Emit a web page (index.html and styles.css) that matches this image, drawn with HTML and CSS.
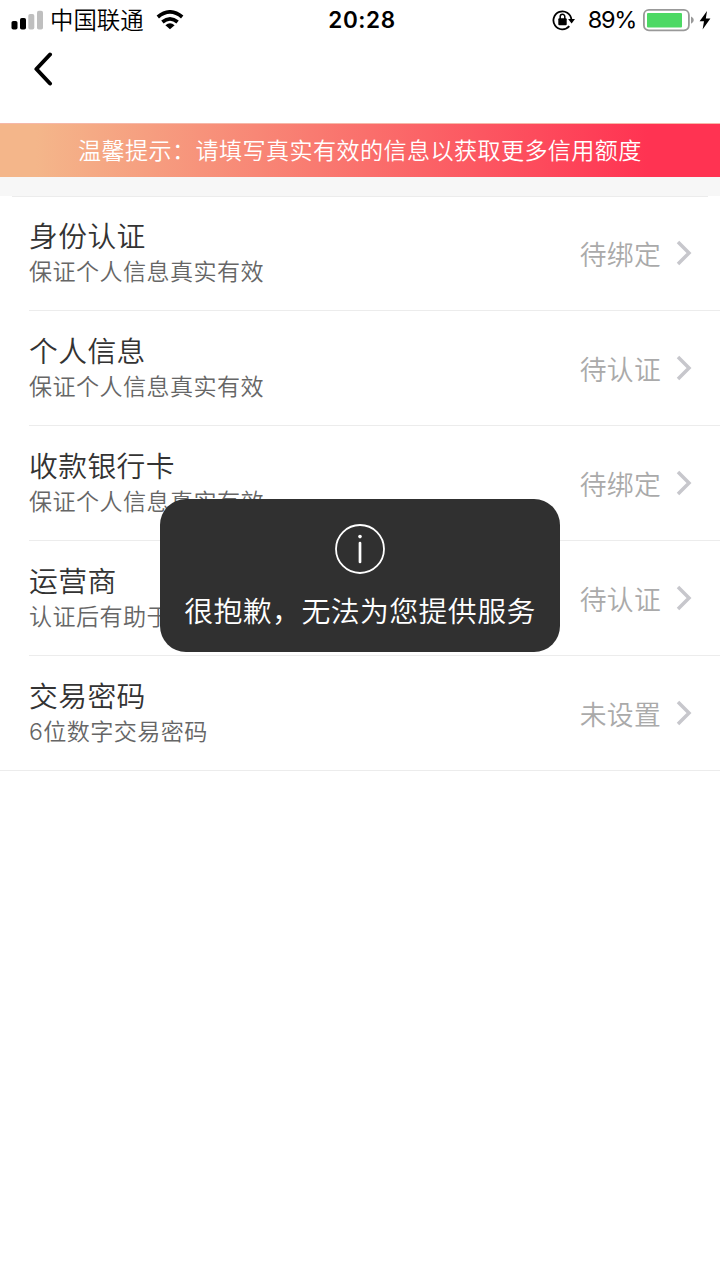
FILE: index.html
```html
<!DOCTYPE html>
<html lang="zh-CN">
<head>
<meta charset="utf-8">
<title>认证</title>
<link rel="stylesheet" href="styles.css">
</head>
<body>
<header class="status-bar">
  <div class="status-left">
    <svg class="signal" width="33" height="20" viewBox="0 0 33 20">
      <rect x="0.5" y="11" width="6" height="8.5" rx="1.8"/>
      <rect x="9" y="8" width="6" height="11.5" rx="1.8"/>
      <rect class="signal-off" x="17.3" y="4" width="6" height="15.5" rx="1.8"/>
      <rect class="signal-off" x="26" y="0.8" width="6" height="18.7" rx="1.8"/>
    </svg>
    <span class="carrier">中国联通</span>
    <svg class="wifi" width="28" height="20" viewBox="0 0 28 20">
      <path d="M1.8 7Q14-3.2 26.2 7M6.4 12Q14 5.8 21.6 12" fill="none" stroke="#000" stroke-width="3.7"/>
      <path d="M9.4 15.2Q14 11.4 18.6 15.2L14 19.2Z"/>
    </svg>
  </div>
  <time class="clock">20:28</time>
  <div class="status-right">
    <svg class="rotation-lock" width="24" height="22" viewBox="0 0 24 22">
      <path d="M17.3 17.2A9 9 0 1 1 19.4 10.5" fill="none" stroke="#000" stroke-width="1.8"/>
      <path d="M16.1 10H23L19.6 14.4Z"/>
      <rect x="6.3" y="9.2" width="8.4" height="7" rx="1"/>
      <path d="M8.2 10V7.6a2.3 2.3 0 0 1 4.6 0V10" fill="none" stroke="#000" stroke-width="1.5"/>
    </svg>
    <span class="percent">89%</span>
    <svg class="battery" width="51" height="23" viewBox="0 0 51 23">
      <rect x="0.9" y="0.9" width="45" height="20.4" rx="5" fill="#fff" stroke="#999" stroke-width="1.8"/>
      <rect x="4" y="4" width="35" height="14.4" rx="1" fill="#4cd964"/>
      <path d="M48 7.5q2.8 1 2.8 3.6T48 14.7Z" fill="#999"/>
    </svg>
    <svg class="bolt" width="12" height="19" viewBox="0 0 12 19">
      <path d="M8 0L0.6 10.2H5L3.6 18.6L11.4 7.6H6.8Z"/>
    </svg>
  </div>
</header>
<nav class="nav-bar">
  <svg class="back" width="20" height="34" viewBox="0 0 20 34">
    <path d="M17 2.5L3.4 17L17 31.5" fill="none" stroke="#000" stroke-width="4" stroke-linecap="round" stroke-linejoin="round"/>
  </svg>
</nav>
<p class="notice">温馨提示：请填写真实有效的信息以获取更多信用额度</p>
<main class="list">
  <section class="row">
    <div class="info"><h2 class="title">身份认证</h2><p class="desc">保证个人信息真实有效</p></div>
    <span class="state">待绑定</span>
    <svg class="chevron" width="17" height="26" viewBox="0 0 17 26"><path d="M2 2L13 13L2 24"/></svg>
  </section>
  <section class="row">
    <div class="info"><h2 class="title">个人信息</h2><p class="desc">保证个人信息真实有效</p></div>
    <span class="state">待认证</span>
    <svg class="chevron" width="17" height="26" viewBox="0 0 17 26"><path d="M2 2L13 13L2 24"/></svg>
  </section>
  <section class="row">
    <div class="info"><h2 class="title">收款银行卡</h2><p class="desc">保证个人信息真实有效</p></div>
    <span class="state">待绑定</span>
    <svg class="chevron" width="17" height="26" viewBox="0 0 17 26"><path d="M2 2L13 13L2 24"/></svg>
  </section>
  <section class="row">
    <div class="info"><h2 class="title">运营商</h2><p class="desc">认证后有助于</p></div>
    <span class="state">待认证</span>
    <svg class="chevron" width="17" height="26" viewBox="0 0 17 26"><path d="M2 2L13 13L2 24"/></svg>
  </section>
  <section class="row">
    <div class="info"><h2 class="title">交易密码</h2><p class="desc">6位数字交易密码</p></div>
    <span class="state">未设置</span>
    <svg class="chevron" width="17" height="26" viewBox="0 0 17 26"><path d="M2 2L13 13L2 24"/></svg>
  </section>
</main>
<div class="toast" role="alert">
  <svg class="toast-icon" width="50" height="50" viewBox="0 0 50 50">
    <circle cx="25" cy="25" r="24" fill="none" stroke="#fff" stroke-width="1.8"/>
    <circle cx="25" cy="12.6" r="1.8" fill="#fff"/>
    <path d="M25 19V38" stroke="#fff" stroke-width="2.7" stroke-linecap="round"/>
  </svg>
  <p class="toast-text">很抱歉，无法为您提供服务</p>
</div>
</body>
</html>
```
FILE: styles.css
```css
* { box-sizing: border-box; }
body {
  margin: 0;
  min-height: 1280px;
  background: #fff;
  font-family: Inter, "Noto Sans CJK SC", sans-serif;
  font-weight: 350;
  color: #000;
}
h2, p { margin: 0; }
svg { display: block; flex: none; }
.status-bar {
  display: grid;
  grid-template-columns: 1fr auto 1fr;
  height: 40px;
  padding: 0 9px 0 11px;
  align-items: center;
}
.status-left, .status-right { display: flex; align-items: center; }
.status-right { justify-content: flex-end; }
.signal-off { fill: #bfbfbf; }
.carrier {
  margin: 0 12px 0 6px;
  padding-top: 2px;
  font-size: 23.4px;
  line-height: 38px;
  font-weight: 350;
}
.clock {
  padding-left: 2px;
  font-size: 22.5px;
  line-height: 40px;
  font-weight: 600;
  letter-spacing: 0.6px;
}
.percent {
  margin: 0 7px 0 12px;
  font-size: 23.5px;
  line-height: 40px;
  font-weight: 400;
  letter-spacing: -1.3px;
}
.bolt { margin-left: 5px; }
.nav-bar { display: flex; height: 83px; padding: 12px 0 0 33px; }
.notice {
  height: 54px;
  padding-left: 78px;
  border-top: 1px solid #f6b8a9;
  background: linear-gradient(90deg, #f4b68a 5%, #ff3352 90%);
  color: #fff;
  font-size: 23.1px;
  line-height: 55px;
  letter-spacing: 0.4px;
  white-space: nowrap;
}
.list {
  border-top: 19px solid #f7f7f7;
  background: linear-gradient(#ececec, #ececec) 50% 0 / 696px 1px no-repeat #fff;
}
.row {
  display: flex;
  align-items: center;
  height: 115.1px;
  margin-left: 29px;
  padding-right: 27px;
  border-bottom: 1px solid #ececec;
}
.row:last-child { margin-left: 0; padding-left: 29px; }
.info { flex: 1; padding-top: 1px; }
.title {
  color: #333;
  font-size: 28.8px;
  font-weight: 350;
  line-height: 37px;
  letter-spacing: 0.4px;
}
.desc {
  color: #666;
  font-size: 23.1px;
  line-height: 34px;
  letter-spacing: 0.4px;
}
.state {
  margin-right: 15px;
  padding-top: 4px;
  color: #aaa;
  font-size: 26.8px;
  line-height: 40px;
  letter-spacing: 0.3px;
}
.chevron path { fill: none; stroke: #c7c7cc; stroke-width: 3.5; }
.toast {
  position: absolute;
  left: 160px;
  top: 499px;
  display: flex;
  flex-direction: column;
  align-items: center;
  width: 400px;
  height: 153px;
  padding-top: 25px;
  border-radius: 26px;
  background: #303030;
}
.toast-text {
  margin-top: 18px;
  color: #fff;
  font-size: 28.9px;
  line-height: 40px;
  letter-spacing: 0.4px;
  white-space: nowrap;
}
```
